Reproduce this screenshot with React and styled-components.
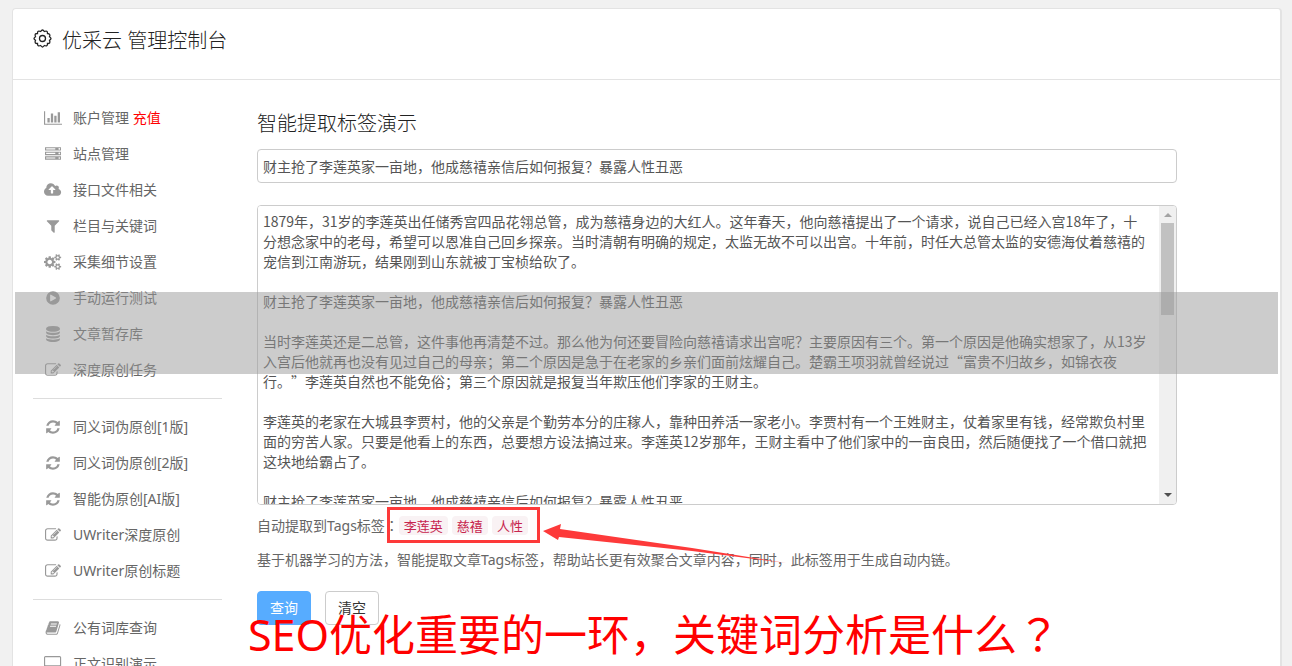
import React from "react";
import styled, { createGlobalStyle } from "styled-components";

const GlobalStyle = createGlobalStyle`
  *, *::before, *::after { box-sizing: border-box; }
  body {
    margin: 0;
    background: #f1f1f1;
    color: #666;
    font: 400 14px/20px "Noto Sans", "Noto Sans CJK SC", sans-serif;
  }
  button, input, textarea { font: inherit; color: inherit; }
`;

const Page = styled.div`
  position: relative;
  height: 100vh;
  overflow: hidden;
  padding: 8px 10px 0 12px;
`;

const Card = styled.div`
  min-height: 100vh;
  background: #fff;
  border: 1px solid #e3e3e3;
  border-right-width: 2px;
  border-radius: 4px;
`;

const Header = styled.header`
  display: flex;
  align-items: flex-start;
  gap: 10px;
  height: 71px;
  padding: 18px 20px 0;
  border-bottom: 1px solid #e3e3e3;
  color: #222;
`;

const Gear = styled.svg`
  margin-top: 2px;
`;

const Title = styled.h1`
  margin: 0;
  font-size: 20px;
  line-height: 28px;
  font-weight: 300;
`;

const Body = styled.div`
  display: flex;
  gap: 35px;
  padding: 20px;
`;

const Sidebar = styled.nav`
  flex: 0 0 189px;
`;

const Menu = styled.ul`
  margin: 0;
  padding: 0 0 10px;
  list-style: none;
  & + & {
    padding-top: 10px;
    border-top: 1px solid #ddd;
  }
`;

const MenuLink = styled.a`
  display: flex;
  align-items: center;
  gap: 10px;
  height: 36px;
  padding-left: 10px;
  color: #666;
  text-decoration: none;
`;

const IconSlot = styled.span`
  display: flex;
  justify-content: center;
  width: 20px;
  color: #999;
`;

const Recharge = styled.span`
  color: #f00;
`;

const Main = styled.main`
  flex: 1;
  min-width: 0;
  max-width: 920px;
`;

const Heading = styled.h2`
  margin: 10px 0 11px;
  color: #222;
  font-size: 20px;
  line-height: 28px;
  font-weight: 300;
`;

const TextInput = styled.input`
  display: block;
  width: 100%;
  height: 34px;
  padding: 6px 5px;
  border: 1px solid #ccc;
  border-radius: 4px;
  color: #555;
  outline: 0;
`;

const Editor = styled.div`
  display: flex;
  height: 300px;
  margin-top: 22px;
  overflow: hidden;
  border: 1px solid #ccc;
  border-radius: 4px;
`;

const TextArea = styled.textarea`
  flex: 1;
  padding: 5px 10px 0 5px;
  border: 0;
  outline: 0;
  resize: none;
  overflow: hidden;
  color: #555;
  line-height: 20px;
  font-family: "Noto Sans CJK SC", sans-serif;
  text-spacing-trim: space-all;
`;

const ScrollBar = styled.div`
  display: flex;
  flex-direction: column;
  align-items: center;
  width: 17px;
  padding: 7px 0;
  background: #f0f0f0;
`;

const Thumb = styled.div`
  flex: 0 0 92px;
  width: 13px;
  margin: 6px 0 auto;
  background: #c1c1c1;
`;

const ScrollArrow = styled.span`
  border: 4px solid transparent;
  border-top-width: ${(p) => (p.$down ? "4px" : 0)};
  border-bottom-width: ${(p) => (p.$down ? 0 : "4px")};
  border-${(p) => (p.$down ? "top" : "bottom")}-color: ${(p) => (p.$down ? "#505050" : "#a3a3a3")};
`;

const TagRow = styled.div`
  display: flex;
  align-items: center;
  height: 20px;
  margin-top: 10px;
`;

const TagGroup = styled.div`
  position: relative;
  display: flex;
  gap: 4px;
`;

const Tag = styled.code`
  padding: 0 5px;
  border-radius: 4px;
  background: #f9f2f4;
  color: #c7254e;
  font: 400 13px/19px "Noto Sans CJK SC", sans-serif;
`;

const Highlight = styled.div`
  position: absolute;
  inset: -9px -12px -8px -12px;
  border: 3px solid #fd3a3a;
`;

const Arrow = styled.svg`
  position: absolute;
  top: 0;
  left: 143px;
  max-width: none;
`;

const Note = styled.p`
  margin: 15px 0 21px;
`;

const Buttons = styled.div`
  display: flex;
  gap: 14px;
`;

const Button = styled.button`
  height: 34px;
  padding: 0 12px;
  border: 1px solid ${(p) => (p.$primary ? "#57acff" : "#ccc")};
  border-radius: 4px;
  background: ${(p) => (p.$primary ? "#57acff" : "#fff")};
  color: ${(p) => (p.$primary ? "#fff" : "#333")};
`;

const Band = styled.div`
  position: absolute;
  top: 292px;
  left: 15px;
  right: 14px;
  height: 82px;
  background: rgba(153, 153, 153, 0.5);
  pointer-events: none;
`;

const Caption = styled.div`
  position: absolute;
  bottom: 0;
  left: 248px;
  color: #f00;
  font-size: 43px;
  line-height: 62px;
  white-space: nowrap;
  pointer-events: none;
`;

const CenteredMark = styled.span`
  font-family: "Noto Sans CJK TC", sans-serif;
`;

/* Sets full-width colons and question marks in the middle of their cell. */
function Zh({ children }) {
  return children
    .split(/([：？])/)
    .map((part, i) => (i % 2 ? <CenteredMark key={i}>{part}</CenteredMark> : part));
}

const smallCog =
  "v140q0 16-149 31-12 27-30 52 51 113 51 138 0 4-4 7-122 71-124 71-8 0-46-47t-52-68q-20 2-30 2t-30-2q-14 21-52 68t-46 47q-2 0-124-71-4-3-4-7 0-25 51-138-18-25-30-52-149-15-149-31v-140q0-16 149-31 13-29 30-52-51-113-51-138 0-4 4-7 4-2 35-20t59-34 30-16q8 0 46 46.5t52 67.5q20-2 30-2t30 2q51-71 92-112l6-2q4 0 124 70 4 3 4 7 0 25-51 138 17 23 30 52 149 15 149 31z";

const ICONS = {
  chart: [0, 2048, "M640 896v512h-256v-512h256zm384-512v1024h-256v-1024h256zm1024 1152v128h-2048v-1536h128v1408h1920zm-640-896v768h-256v-768h256zm384-384v1152h-256v-1152h256z"],
  server: [0, 1792, "M128 1408h1024v-128h-1024v128zm0-512h1024v-128h-1024v128zm1568 448q0-40-28-68t-68-28-68 28-28 68 28 68 68 28 68-28 28-68zm-1568-960h1024v-128h-1024v128zm1568 448q0-40-28-68t-68-28-68 28-28 68 28 68 68 28 68-28 28-68zm0-512q0-40-28-68t-68-28-68 28-28 68 28 68 68 28 68-28 28-68zm96 832v384h-1792v-384h1792zm0-512v384h-1792v-384h1792zm0-512v384h-1792v-384h1792z"],
  upload: [-64, 1920, "M1216 864q0-14-9-23l-352-352q-9-9-23-9t-23 9l-351 351q-10 12-10 24 0 14 9 23t23 9h224v352q0 13 9.500 22.500t22.500 9.500h192q13 0 22.500-9.500t9.500-22.500v-352h224q13 0 22.500-9.500t9.500-22.500zm640 288q0 159-112.500 271.500t-271.500 112.500h-1088q-185 0-316.500-131.500t-131.500-316.500q0-130 70-240t188-165q-2-30-2-43 0-212 150-362t362-150q156 0 285.500 87t188.500 231q71-62 166-62 106 0 181 75t75 181q0 76-41 138 130 31 213.500 135.500t83.500 238.500z"],
  filter: [0, 1792, "M1595 295q17 41-14 70l-493 493v742q0 42-39 59-13 5-25 5-27 0-45-19l-256-256q-19-19-19-45v-486l-493-493q-31-29-14-70 17-39 59-39h1280q42 0 59 39z"],
  cogs: [0, 1920, "M896 896q0-106-75-181t-181-75-181 75-75 181 75 181 181 75 181-75 75-181zm768 512q0-52-38-90t-90-38-90 38-38 90q0 53 37.500 90.500t90.500 37.500 90.500-37.500 37.500-90.500zm0-1024q0-52-38-90t-90-38-90 38-38 90q0 53 37.500 90.500t90.500 37.500 90.500-37.500 37.500-90.500zm-384 421v185q0 10-7 19.500t-16 10.500l-155 24q-11 35-32 76 34 48 90 115 7 11 7 20 0 12-7 19-23 30-82.500 89.500t-78.500 59.500q-11 0-21-7l-115-90q-37 19-77 31-11 108-23 155-7 24-30 24h-186q-11 0-20-7.500t-10-17.500l-23-153q-34-10-75-31l-118 89q-7 7-20 7-11 0-21-8-144-133-144-160 0-9 7-19 10-14 41-53t47-61q-23-44-35-82l-152-24q-10-1-17-9.500t-7-19.500v-185q0-10 7-19.500t16-10.500l155-24q11-35 32-76-34-48-90-115-7-11-7-20 0-12 7-20 22-30 82-89t79-59q11 0 21 7l115 90q34-18 77-32 11-108 23-154 7-24 30-24h186q11 0 20 7.500t10 17.500l23 153q34 10 75 31l118-89q8-7 20-7 11 0 21 8 144 133 144 160 0 8-7 19-12 16-42 54t-45 60q23 48 34 82l152 23q10 2 17 10.500t7 19.500zM1920 1338" + smallCog + "M1920 314" + smallCog],
  play: [0, 1792, "M896 128a768 768 0 1 1 0 1536a768 768 0 1 1 0-1536zM1216 951q32-18 32-55t-32-55l-544-320q-31-19-64-1q-32 19-32 56v640q0 37 32 56q16 8 32 8q17 0 32-9z"],
  database: [0, 1792, "M896 768q237 0 443-43t325-127v170q0 69-103 128t-280 93.500-385 34.500-385-34.500-280-93.500-103-128v-170q119 84 325 127t443 43zm0 768q237 0 443-43t325-127v170q0 69-103 128t-280 93.500-385 34.500-385-34.500-280-93.500-103-128v-170q119 84 325 127t443 43zm0-384q237 0 443-43t325-127v170q0 69-103 128t-280 93.500-385 34.500-385-34.500-280-93.500-103-128v-170q119 84 325 127t443 43zm0-1152q208 0 385 34.500t280 93.500 103 128v128q0 69-103 128t-280 93.500-385 34.500-385-34.500-280-93.500-103-128v-128q0-69 103-128t280-93.500 385-34.500z"],
  edit: [0, 1792, "M888 1184l116-116-152-152-116 116v56h96v96h56zm440-720q-16-16-33 1l-350 350q-17 17-1 33t33-1l350-350q17-17 1-33zm80 594v190q0 119-84.500 203.500t-203.500 84.500h-832q-119 0-203.500-84.500t-84.500-203.500v-832q0-119 84.500-203.500t203.500-84.500h832q63 0 117 25 15 7 18 23 3 17-9 29l-49 49q-14 14-32 8-23-6-45-6h-832q-66 0-113 47t-47 113v832q0 66 47 113t113 47h832q66 0 113-47t47-113v-126q0-13 9-22l64-64q15-15 35-7t20 29zm-96-738l288 288-672 672h-288v-288zm444 132l-92 92-288-288 92-92q28-28 68-28t68 28l152 152q28 28 28 68t-28 68z"],
  refresh: [0, 1792, "M1639 1056q0 5-1 7-64 268-268 434.500t-478 166.500q-146 0-282.500-55t-243.500-157l-129 129q-19 19-45 19t-45-19-19-45v-448q0-26 19-45t45-19h448q26 0 45 19t19 45-19 45l-137 137q71 66 161 102t187 36q134 0 250-65t186-179q11-17 53-117 8-23 30-23h192q13 0 22.500 9.500t9.500 22.500zm25-800v448q0 26-19 45t-45 19h-448q-26 0-45-19t-19-45 19-45l138-138q-148-137-349-137-134 0-250 65t-186 179q-11 17-53 117-8 23-30 23h-199q-13 0-22.500-9.500t-9.500-22.500v-7q65-268 270-434.500t480-166.500q146 0 284 55.500t245 156.500l130-129q19-19 45-19t45 19 19 45z"],
  book: [0, 1792, "M1703 478q40 57 18 129l-275 906q-19 64-76.500 107.500t-122.500 43.500h-923q-77 0-148.500-53.500t-99.500-131.500q-24-67-2-127 0-4 3-27t4-37q1-8-3-21.500t-3-19.500q2-11 8-21t16.500-23.500 16.500-23.500q23-38 45-91.500t30-91.500q3-10 .5-30t-.5-28q3-11 17-28t17-23q21-36 42-92t25-90q1-9-2.500-32t.5-28q4-13 22-30.500t22-22.500q19-26 42.500-84.500t27.500-96.500q1-8-3-25.500t-2-26.500q2-8 9-18t18-23 17-21q8-12 16.500-30.500t15-35 16-36 19.500-32 26.500-23.500 36-11.500 47.500 5.500l-1 3q38-9 51-9h761q74 0 114 56t18 130l-274 906q-36 119-71.500 153.500t-128.500 34.500h-869q-27 0-38 15-11 16-1 43 24 70 144 70h923q29 0 56-15.500t35-41.500l300-987q7-22 5-57 38 15 59 43zm-1064 2q-4 13 2 22.500t20 9.500h608q13 0 25.500-9.500t16.500-22.500l21-64q4-13-2-22.500t-20-9.500h-608q-13 0-25.500 9.500t-16.500 22.500zm-83 256q-4 13 2 22.500t20 9.500h608q13 0 25.500-9.500t16.500-22.500l21-64q4-13-2-22.500t-20-9.500h-608q-13 0-25.500 9.500t-16.500 22.500z"],
  desktop: [-64, 1920, "M1728 992v-832q0-13-9.500-22.500t-22.500-9.500h-1600q-13 0-22.500 9.500t-9.500 22.500v832q0 13 9.500 22.500t22.500 9.500h1600q13 0 22.500-9.500t9.500-22.500zm128-832v1088q0 66-47 113t-113 47h-544q0 37 16 77.500t32 71 16 43.500q0 26-19 45t-45 19h-512q-26 0-45-19t-19-45q0-14 16-44t32-70 16-78h-544q-66 0-113-47t-47-113v-1088q0-66 47-113t113-47h1600q66 0 113 47t47 113z"],
};

function Icon({ name }) {
  const [x, width, path] = ICONS[name];
  return (
    <svg width={width / 112} height="16" viewBox={`${x} 0 ${width} 1792`} fill="currentColor" fillRule="evenodd" aria-hidden="true">
      <path d={path} />
    </svg>
  );
}

const MENUS = [
  [
    ["chart", "账户管理"],
    ["server", "站点管理"],
    ["upload", "接口文件相关"],
    ["filter", "栏目与关键词"],
    ["cogs", "采集细节设置"],
    ["play", "手动运行测试"],
    ["database", "文章暂存库"],
    ["edit", "深度原创任务"],
  ],
  [
    ["refresh", "同义词伪原创[1版]"],
    ["refresh", "同义词伪原创[2版]"],
    ["refresh", "智能伪原创[AI版]"],
    ["edit", "UWriter深度原创"],
    ["edit", "UWriter原创标题"],
  ],
  [
    ["book", "公有词库查询"],
    ["desktop", "正文识别演示"],
  ],
];

const TITLE = "财主抢了李莲英家一亩地，他成慈禧亲信后如何报复？暴露人性丑恶";

const ARTICLE = [
  "1879年，31岁的李莲英出任储秀宫四品花翎总管，成为慈禧身边的大红人。这年春天，他向慈禧提出了一个请求，说自己已经入宫18年了，十分想念家中的老母，希望可以恩准自己回乡探亲。当时清朝有明确的规定，太监无故不可以出宫。十年前，时任大总管太监的安德海仗着慈禧的宠信到江南游玩，结果刚到山东就被丁宝桢给砍了。",
  TITLE,
  "当时李莲英还是二总管，这件事他再清楚不过。那么他为何还要冒险向慈禧请求出宫呢？主要原因有三个。第一个原因是他确实想家了，从13岁入宫后他就再也没有见过自己的母亲；第二个原因是急于在老家的乡亲们面前炫耀自己。楚霸王项羽就曾经说过“富贵不归故乡，如锦衣夜行。”李莲英自然也不能免俗；第三个原因就是报复当年欺压他们李家的王财主。",
  "李莲英的老家在大城县李贾村，他的父亲是个勤劳本分的庄稼人，靠种田养活一家老小。李贾村有一个王姓财主，仗着家里有钱，经常欺负村里面的穷苦人家。只要是他看上的东西，总要想方设法搞过来。李莲英12岁那年，王财主看中了他们家中的一亩良田，然后随便找了一个借口就把这块地给霸占了。",
  TITLE,
].join("\n\n");

export default function App() {
  return (
    <Page>
      <GlobalStyle />
      <Card>
        <Header>
          <Gear width="19" height="19" viewBox="0 0 19 19" fill="none" stroke="currentColor" strokeWidth="1.300" aria-hidden="true">
            <path d="M7.700 2.500Q9.500-.5 11.300 2.500Q14.700 1.100 14.500 4.500Q17.900 4.900 16.500 7.700Q19.500 9.500 16.500 11.300Q17.900 14.700 14.500 14.500Q14.700 17.900 11.300 16.500Q9.500 19.500 7.700 16.500Q4.300 17.900 4.500 14.500Q1.100 14.700 2.500 11.300Q-.5 9.500 2.500 7.700Q1.100 4.300 4.500 4.500Q4.300 1.100 7.700 2.500Z" />
            <circle cx="9.500" cy="9.500" r="3" />
          </Gear>
          <Title>优采云 管理控制台</Title>
        </Header>
        <Body>
          <Sidebar>
            {MENUS.map((items, i) => (
              <Menu key={i}>
                {items.map(([icon, label]) => (
                  <li key={label}>
                    <MenuLink href="#">
                      <IconSlot><Icon name={icon} /></IconSlot>
                      <span>{label}{icon === "chart" && <Recharge> 充值</Recharge>}</span>
                    </MenuLink>
                  </li>
                ))}
              </Menu>
            ))}
          </Sidebar>
          <Main>
            <Heading>智能提取标签演示</Heading>
            <TextInput aria-label="文章标题" defaultValue={TITLE} />
            <Editor>
              <TextArea aria-label="文章内容" defaultValue={ARTICLE} />
              <ScrollBar aria-hidden="true">
                <ScrollArrow />
                <Thumb />
                <ScrollArrow $down />
              </ScrollBar>
            </Editor>
            <TagRow>
              <span><Zh>自动提取到Tags标签：</Zh></span>
              <TagGroup>
                <Tag>李莲英</Tag>
                <Tag>慈禧</Tag>
                <Tag>人性</Tag>
                <Highlight />
                <Arrow width="246" height="50" viewBox="0 0 246 50" fill="#fd3a3a" aria-hidden="true">
                  <path d="M1 15L19 8L18 13L150 32L244 47L150 35L17 21L16 24Z" />
                </Arrow>
              </TagGroup>
            </TagRow>
            <Note><Zh>基于机器学习的方法，智能提取文章Tags标签，帮助站长更有效聚合文章内容，同时，此标签用于生成自动内链。</Zh></Note>
            <Buttons>
              <Button type="button" $primary>查询</Button>
              <Button type="button">清空</Button>
            </Buttons>
          </Main>
        </Body>
      </Card>
      <Band />
      <Caption><Zh>SEO优化重要的一环，关键词分析是什么？</Zh></Caption>
    </Page>
  );
}
